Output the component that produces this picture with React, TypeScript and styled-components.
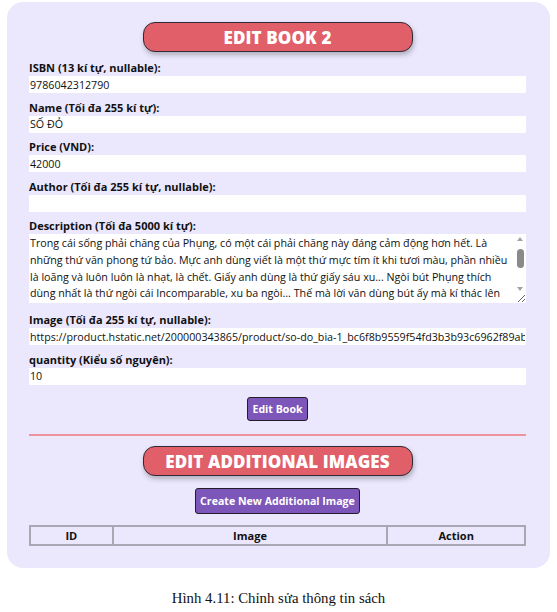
import React from "react";
import styled, { createGlobalStyle } from "styled-components";

const GlobalStyle = createGlobalStyle`
  html, body {
    margin: 0;
    padding: 0;
    background: #ffffff;
  }
  body {
    font-family: "Open Sans", "Noto Sans", sans-serif;
  }
  * {
    box-sizing: border-box;
  }
`;

const Page = styled.div`
  width: 557px;
  display: flex;
  flex-direction: column;
  align-items: center;
`;

const Card = styled.div`
  width: 543px;
  margin: 2px 7px 0;
  padding: 20px 24px 22px 22px;
  background: #ebe7fd;
  border-radius: 16px;
  display: flex;
  flex-direction: column;
`;

const Title = styled.h2<{ after: number }>`
  align-self: center;
  width: 270px;
  height: 30px;
  margin: 0 0 ${({ after }) => after}px;
  display: flex;
  align-items: center;
  justify-content: center;
  background: #e05f69;
  border: 1.5px solid #2f2a36;
  border-radius: 12px;
  box-shadow: 1px 3px 5px rgba(0, 0, 0, 0.25);
  color: #ffffff;
  font-size: 17px;
  font-weight: 800;
  letter-spacing: 0.1px;
`;

const Field = styled.div<{ after?: number }>`
  display: flex;
  flex-direction: column;
  margin-bottom: ${({ after }) => after ?? 7.5}px;
`;

const Label = styled.label`
  font-size: 11px;
  font-weight: 700;
  line-height: 14px;
  color: #111;
  margin-bottom: 1px;
`;

const Input = styled.input`
  height: 17px;
  width: 100%;
  border: none;
  outline: none;
  padding: 0 1px;
  background: #ffffff;
  font-family: "Open Sans", "Noto Sans", sans-serif;
  font-size: 10.7px;
  color: #111;
`;

const ScrollBox = styled.div`
  position: relative;
  height: 69px;
`;

const TextArea = styled.textarea`
  display: block;
  height: 69px;
  width: 100%;
  border: none;
  outline: none;
  padding: 1px 13px 1px 1px;
  background: #ffffff;
  font-family: "Open Sans", "Noto Sans", sans-serif;
  font-size: 10.7px;
  line-height: 16.8px;
  color: #111;
  resize: vertical;
  overflow-y: scroll;
`;

const ScrollBar = styled.div`
  position: absolute;
  top: 3px;
  right: 1px;
  width: 10px;
  height: 54px;
  display: flex;
  flex-direction: column;
  align-items: center;
  justify-content: space-between;
  pointer-events: none;
`;

const Arrow = styled.div<{ down?: boolean }>`
  width: 0;
  height: 0;
  border-left: 3.5px solid transparent;
  border-right: 3.5px solid transparent;
  ${({ down }) =>
    down ? "border-top: 4px solid #a3a3a3;" : "border-bottom: 4px solid #a3a3a3;"}
`;

const Thumb = styled.div`
  width: 7px;
  height: 19px;
  margin-top: -12px;
  border-radius: 4px;
  background: #8a8a8a;
`;

const ButtonRow = styled.div<{ before: number; after: number }>`
  display: flex;
  justify-content: center;
  margin: ${({ before }) => before}px 0 ${({ after }) => after}px;
`;

const Button = styled.button<{ tall?: boolean }>`
  height: ${({ tall }) => (tall ? 26 : 24)}px;
  padding: 0 4px;
  background: #7c56b8;
  border: 1.5px solid #231d2b;
  border-radius: 3px;
  color: #ffffff;
  font-family: "Open Sans", "Noto Sans", sans-serif;
  font-size: 10.6px;
  font-weight: 700;
  cursor: pointer;
`;

const Divider = styled.hr`
  width: 100%;
  height: 2px;
  margin: 0 0 10px;
  border: none;
  background: #ee939c;
`;

const Table = styled.table`
  width: 100%;
  border-collapse: collapse;
  border: 2px solid #a9a7b3;
`;

const Th = styled.th<{ w: string }>`
  width: ${({ w }) => w};
  height: 19px;
  padding: 0;
  border: 2px solid #a9a7b3;
  font-size: 11px;
  font-weight: 700;
  color: #111;
  text-align: center;
`;

const Caption = styled.p`
  margin: 22px 0 0;
  font-family: "Liberation Serif", "Times New Roman", serif;
  font-size: 14.8px;
  color: #111;
`;

const description =
  "Trong cái sống phải chăng của Phụng, có một cái phải chăng này đáng cảm động hơn hết. Là những thứ văn phong tứ bảo. Mực anh dùng viết là một thứ mực tím ít khi tươi màu, phần nhiều là loãng và luôn luôn là nhạt, là chết. Giấy anh dùng là thứ giấy sáu xu... Ngòi bút Phụng thích dùng nhất là thứ ngòi cái Incomparable, xu ba ngòi... Thế mà lời văn dùng bút ấy mà kí thác lên giấy ấy thì lại là những lời văn đầy tình cảm, đầy nhiệt huyết.";

const fields: { label: string; value: string }[] = [
  { label: "ISBN (13 kí tự, nullable):", value: "9786042312790" },
  { label: "Name (Tối đa 255 kí tự):", value: "SỐ ĐỎ" },
  { label: "Price (VND):", value: "42000" },
  { label: "Author (Tối đa 255 kí tự, nullable):", value: "" },
];

export default function App() {
  return (
    <Page>
      <GlobalStyle />
      <Card>
        <Title after={9}>EDIT BOOK 2</Title>
        {fields.map((f) => (
          <Field key={f.label}>
            <Label>{f.label}</Label>
            <Input defaultValue={f.value} />
          </Field>
        ))}
        <Field after={10}>
          <Label>Description (Tối đa 5000 kí tự):</Label>
          <ScrollBox>
            <TextArea defaultValue={description} />
            <ScrollBar>
              <Arrow />
              <Thumb />
              <Arrow down />
            </ScrollBar>
          </ScrollBox>
        </Field>
        <Field>
          <Label>Image (Tối đa 255 kí tự, nullable):</Label>
          <Input defaultValue="https://product.hstatic.net/200000343865/product/so-do_bia-1_bc6f8b9559f54fd3b3b93c6962f89ab5_master.jpg" />
        </Field>
        <Field after={0}>
          <Label>quantity (Kiểu số nguyên):</Label>
          <Input defaultValue="10" />
        </Field>
        <ButtonRow before={12.5} after={13}>
          <Button>Edit Book</Button>
        </ButtonRow>
        <Divider />
        <Title after={12}>EDIT ADDITIONAL IMAGES</Title>
        <ButtonRow before={0} after={11}>
          <Button tall>Create New Additional Image</Button>
        </ButtonRow>
        <Table>
          <thead>
            <tr>
              <Th w="16.7%">ID</Th>
              <Th w="55.5%">Image</Th>
              <Th w="27.8%">Action</Th>
            </tr>
          </thead>
        </Table>
      </Card>
      <Caption>Hình 4.11: Chỉnh sửa thông tin sách</Caption>
    </Page>
  );
}
